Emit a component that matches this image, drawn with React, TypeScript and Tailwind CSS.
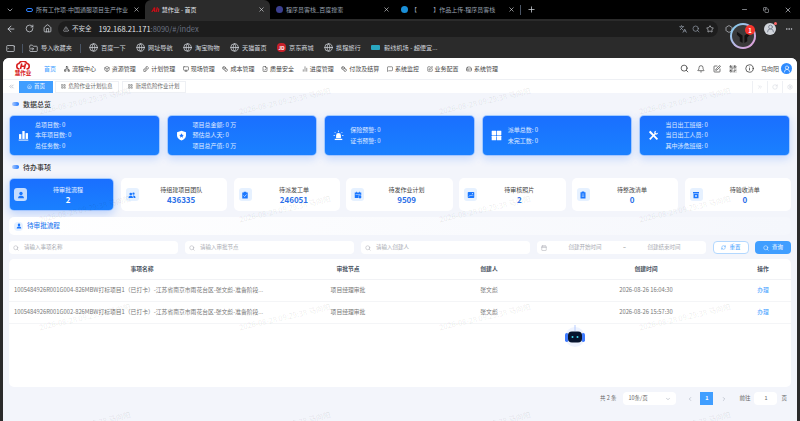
import React from 'react';
import {
  ArrowLeft, RotateCw, Home, AlertTriangle, Globe, Search, Star, X, Plus, Minus, Copy, MoreHorizontal,
  Bell, SquarePen, QrCode, Info, ChevronsLeft, ChevronsRight, Settings, ChevronLeft, ChevronRight, ChevronDown,
  LayoutGrid, Calendar, RefreshCw, Network, Box, FileStack, Monitor, Coins, FileCheck, ChartNoAxesColumn, MessageSquare,
  FolderInput, Languages, Tablet, HardDrive, UserRound, Hexagon,
} from 'lucide-react';

type Glyph = { size?: number; className?: string };

const Svg = ({ size = 12, className, children }: Glyph & { children: React.ReactNode }) => (
  <svg width={size} height={size} viewBox="0 0 16 16" fill="currentColor" className={className}>{children}</svg>
);

const BarsIcon = (p: Glyph) => (
  <Svg {...p}><rect x="1.5" y="6" width="3.4" height="7" /><rect x="6.3" y="1.5" width="3.4" height="11.5" /><rect x="11.1" y="4.5" width="3.4" height="8.5" /><rect x="1" y="14" width="14" height="1.4" /></Svg>
);
const ShieldIcon = (p: Glyph) => (
  <Svg {...p}><path d="M8 1 L14.5 3.2 V8 C14.5 11.5 11.5 14 8 15.4 C4.5 14 1.5 11.5 1.5 8 V3.2 Z" /><path d="M8 4.6 L9 7 L11.4 7.2 L9.6 8.8 L10.2 11.2 L8 9.9 L5.8 11.2 L6.4 8.8 L4.6 7.2 L7 7 Z" fill="#1a73ff" /></Svg>
);
const SirenIcon = (p: Glyph) => (
  <Svg {...p}><path d="M4.5 12 V8 A3.5 3.5 0 0 1 11.5 8 V12 Z" /><rect x="2.5" y="12.8" width="11" height="1.8" /><path d="M8 .8 V3 M2.4 3 L3.9 4.5 M13.6 3 L12.1 4.5 M.8 8 H2.8 M13.2 8 H15.2" stroke="currentColor" strokeWidth="1.1" /></Svg>
);
const GridIcon = (p: Glyph) => (
  <Svg {...p}><rect x="1" y="1" width="6.5" height="6.5" rx=".5" /><rect x="8.5" y="1" width="6.5" height="6.5" rx=".5" /><rect x="1" y="8.5" width="6.5" height="6.5" rx=".5" /><rect x="8.5" y="8.5" width="6.5" height="6.5" rx=".5" /></Svg>
);
const ToolsIcon = (p: Glyph) => (
  <Svg {...p}><path d="M2 2 L3.6 1.2 L14.6 12.6 L12.8 14.6 L1.6 3.6 Z" /><path d="M14.8 3.6 A3.4 3.4 0 0 1 10.4 6.6 L3.6 14.4 L1.6 12.6 L9.2 5.4 A3.4 3.4 0 0 1 12.2 1.2 L10.6 3.2 L12.6 5.2 Z" /></Svg>
);
const PersonIcon = (p: Glyph) => (
  <Svg {...p}><circle cx="8" cy="5" r="3.4" /><path d="M2 14.5 C2 10.8 5 9.6 8 9.6 C11 9.6 14 10.8 14 14.5 Z" /></Svg>
);
const TeamIcon = (p: Glyph) => (
  <Svg {...p}><circle cx="5.5" cy="6" r="2.6" /><path d="M1 14 C1 10.8 3 9.6 5.5 9.6 C8 9.6 10 10.8 10 14 Z" /><circle cx="11" cy="5.4" r="2.3" /><path d="M10.8 9 C13.2 9 15 10.4 15 14 H11.2 C11.2 11.8 10.8 10.4 9.8 9.4 Z" /></Svg>
);
const ClipCheckIcon = (p: Glyph) => (
  <Svg {...p}><path d="M2.5 3 H5.5 V1.5 H10.5 V3 H13.5 V15 H2.5 Z" /><path d="M5 9 L7.3 11.2 L11 7" fill="none" stroke="#e6f1ff" strokeWidth="1.4" /></Svg>
);
const CalendarGearIcon = (p: Glyph) => (
  <Svg {...p}><path d="M1.5 3 H4 V1.5 H5.5 V3 H10.5 V1.5 H12 V3 H14.5 V9 H9 V14 H1.5 Z" /><rect x="3" y="6" width="10" height="1" fill="#e6f1ff" /><circle cx="12" cy="12" r="2.8" /></Svg>
);
const PhotoIcon = (p: Glyph) => (
  <Svg {...p}><rect x="1.5" y="2" width="13" height="12" rx="1.5" /><path d="M3.5 11.5 L6.5 8 L8.5 10 L10.5 7.5 L12.5 10" fill="none" stroke="#e6f1ff" strokeWidth="1.1" /><circle cx="11" cy="5" r="1" fill="#e6f1ff" /></Svg>
);
const ClipListIcon = (p: Glyph) => (
  <Svg {...p}><path d="M3 2.5 H5.5 V1.2 H10.5 V2.5 H13 V15 H3 Z" /><path d="M5.5 6 H10.5 M5.5 8.5 H10.5 M5.5 11 H10.5" stroke="#e6f1ff" strokeWidth=".9" /></Svg>
);
const InboxIcon = (p: Glyph) => (
  <Svg {...p}><path d="M2 2 H14 V5 H2 Z M3 6 H13 V14.5 H3 Z" /><circle cx="8" cy="10" r="1.8" fill="#e6f1ff" /></Svg>
);

const navItems = [
  { label: '流程中心', Icon: Network },
  { label: '资源管理', Icon: Box },
  { label: '计划管理', Icon: FileStack },
  { label: '现场管理', Icon: Monitor },
  { label: '成本管理', Icon: Coins },
  { label: '质量安全', Icon: FileCheck },
  { label: '进度管理', Icon: ChartNoAxesColumn },
  { label: '付款及结算', Icon: Coins },
  { label: '系统监控', Icon: MessageSquare },
  { label: '业务配置', Icon: SquarePen },
  { label: '系统管理', Icon: HardDrive },
];

const bookmarks = ['百度一下', '网址导航', '淘宝购物', '天猫首页'];

const stats = [
  { Icon: BarsIcon, lines: ['总项目数:0', '本年项目数:0', '总任务数:0'] },
  { Icon: ShieldIcon, lines: ['项目总金额:0 万', '预估总人天:0', '项目总产值:0 万'] },
  { Icon: SirenIcon, lines: ['保险预警:0', '证书预警:0'] },
  { Icon: GridIcon, lines: ['派单总数:0', '未完工数:0'] },
  { Icon: ToolsIcon, lines: ['当日出工班组:0', '当日出工人员:0', '其中涉危班组:0'] },
];

const todos = [
  { label: '待组建项目团队', value: '436335', Icon: TeamIcon },
  { label: '待派发工单', value: '246051', Icon: ClipCheckIcon },
  { label: '待发作业计划', value: '9509', Icon: CalendarGearIcon },
  { label: '待审核照片', value: '2', Icon: PhotoIcon },
  { label: '待整改清单', value: '0', Icon: ClipListIcon },
  { label: '待验收清单', value: '0', Icon: InboxIcon },
];

const rows = [
  { name: '1005484926R001G004-826MBW打标项目1（已打卡）-江苏省南京市雨花台区-张文彪-准备阶段...', time: '2026-08-26 16:04:30' },
  { name: '1005484926R001G002-826MBW打标项目1（已打卡）-江苏省南京市雨花台区-张文彪-准备阶段...', time: '2026-08-26 15:57:30' },
];

const Tab = ({ title, active, icon }: { title: string; active?: boolean; icon: React.ReactNode }) => (
  <div className={`w-[125px] h-[19px] flex items-center gap-[3px] pl-[6px] pr-[5px] text-[6px] rounded-t-md ${active ? 'bg-[#2b2b2b] text-gray-200' : 'text-gray-400'}`}>
    {icon}
    <span className="flex-1 whitespace-pre">{title}</span>
    <X size={7} className="text-gray-200" />
  </div>
);

const SectionTitle = ({ title }: { title: string }) => (
  <div className="flex items-center gap-[3px] h-[10px]">
    <span className="w-[7px] h-[4px] rounded-full bg-gradient-to-r from-[#a9c8ff] to-[#1677ff]" />
    <span className="text-[7px] font-medium text-[#333] ml-[1px]">{title}</span>
  </div>
);

const FilterInput = ({ placeholder }: { placeholder: string }) => (
  <div className="w-[169px] h-[13px] bg-white rounded-sm flex items-center gap-[5px] px-[4px] text-[5.5px] text-[#a8abb2]">
    <Search size={6} />
    <span>{placeholder}</span>
  </div>
);

export default function App() {
  return (
    <div className="relative w-[800px] h-[421px] overflow-hidden bg-[#2b2b2b] flex flex-col" style={{ fontFamily: '"Noto Sans CJK SC", "Noto Sans", sans-serif' }}>
      {/* browser tabs */}
      <div className="h-[19px] bg-black flex items-center shrink-0">
        <div className="w-[20px] flex justify-center"><ChevronDown size={8} className="text-gray-300" /></div>
        <Tab title="所有工作项-中国通服项目生产作业" icon={<span className="w-[7px] h-[4px] rounded-full border border-blue-500" />} />
        <Tab active title="慧作业 - 首页" icon={<span className="text-[6px] font-bold text-red-600 italic">Ah</span>} />
        <Tab title="程序员客栈_百度搜索" icon={<span className="w-[7px] h-[7px] rounded-sm bg-[#3b3f8f]" />} />
        <Tab title="【            】作品上传-程序员客栈" icon={<span className="w-[7px] h-[7px] rounded-sm bg-[#1a8fd8]" />} />
        <div className="w-px h-[10px] bg-gray-600" />
        <Plus size={9} className="text-gray-300 ml-[6px]" />
        <div className="flex-1" />
        <div className="flex items-center gap-[15px] pr-[8px] text-gray-300">
          <Minus size={7} /><Copy size={6} /><X size={8} />
        </div>
      </div>

      {/* address bar */}
      <div className="h-[19px] flex items-center shrink-0 text-gray-300 pl-[6px] pr-[7px]">
        <ArrowLeft size={10} />
        <RotateCw size={9} className="ml-[9px]" />
        <Home size={9} className="ml-[9px]" />
        <div className="ml-[6px] flex-1 h-[16px] rounded-full bg-[#1d1d1d] flex items-center pl-[5px] pr-[4px]">
          <AlertTriangle size={6} />
          <span className="text-[6.5px] ml-[3px]">不安全</span>
          <span className="text-[7.5px] ml-[7px] text-gray-200">192.168.21.171<span className="text-gray-500">:8090/#/index</span></span>
          <div className="flex-1" />
          <Languages size={8} className="text-gray-400" />
          <Search size={8} className="ml-[5px] text-gray-400" />
          <Star size={8} className="ml-[6px]" />
        </div>
        <div className="w-[46px] pl-[7px]"><Hexagon size={8} /></div>
        <div className="relative w-[12px] h-[12px] rounded-full bg-gray-300 flex items-center justify-center">
          <UserRound size={9} className="text-gray-500" />
          <span className="absolute -right-[1px] -top-[1px] w-[3px] h-[3px] rounded-full bg-red-400" />
        </div>
        <MoreHorizontal size={8} className="ml-[9px]" />
      </div>

      {/* bookmarks */}
      <div className="h-[20px] flex items-center shrink-0 text-gray-300 text-[6.2px] pl-[6px]">
        <Tablet size={9} className="rotate-90" />
        <div className="w-px h-[9px] bg-gray-600 ml-[7px]" />
        <FolderInput size={9} className="ml-[6px]" />
        <span className="ml-[3px] w-[31px]">导入收藏夹</span>
        <div className="w-px h-[9px] bg-gray-600 ml-[8px]" />
        {bookmarks.map(b => (
          <div key={b} className="flex items-center gap-[3px] ml-[8px] w-[39px]">
            <Globe size={9} className="shrink-0" />
            <span className="whitespace-nowrap">{b}</span>
          </div>
        ))}
        <div className="flex items-center gap-[3px] ml-[8px] w-[39px]">
          <span className="w-[9px] h-[9px] shrink-0 bg-[#c8202a] text-white text-[5px] font-bold flex items-center justify-center rounded-sm">JD</span>
          <span className="whitespace-nowrap">京东商城</span>
        </div>
        <div className="flex items-center gap-[3px] ml-[8px] w-[39px]">
          <Globe size={9} className="shrink-0" />
          <span className="whitespace-nowrap">携程旅行</span>
        </div>
        <div className="flex items-center gap-[4px] ml-[8px]">
          <span className="w-[9px] h-[5px] bg-[#2aa7c0] rounded-[1px]" />
          <span>毅线机场 - 超便宜...</span>
        </div>
      </div>

      {/* app window */}
      <div className="relative flex-1 mx-[3px] bg-[#f3f5fb] rounded-t-md overflow-hidden flex flex-col">
        {/* nav */}
        <div className="h-[21px] bg-white flex items-center pl-[8px] pr-[5px] text-[6px] text-[#444] shrink-0">
          <div className="w-[24px] flex flex-col items-center leading-none">
            <svg width="14" height="9" viewBox="0 0 28 18">
              <path d="M7 16 C0 16 0 6 6 5 C8 -1 20 -1 22 5 C28 6 28 16 21 16" fill="none" stroke="#d81e1e" strokeWidth="3.2" />
              <path d="M11.5 5 L9 16 M19 5 L16.5 16 M9 10.5 L18 10.5" stroke="#d81e1e" strokeWidth="3.2" />
            </svg>
            <span className="text-[5.5px] font-bold text-[#d81e1e] leading-[6px]">慧作业</span>
          </div>
          <span className="ml-[9px] text-[#409eff]">首页</span>
          <div className="flex items-center ml-[8px]">
            {navItems.map(({ label, Icon }) => (
              <div key={label} className="flex items-center gap-[2px] mr-[7.6px] whitespace-nowrap">
                <Icon size={6} className="text-[#333]" />
                <span>{label}</span>
              </div>
            ))}
          </div>
          <div className="flex-1" />
          <div className="flex items-center gap-[8px] text-[#333]">
            <Search size={9} />
            <Bell size={8} />
            <SquarePen size={8} />
            <QrCode size={8} />
            <Info size={9} />
          </div>
          <span className="ml-[7px] text-[#555]">马向阳</span>
          <div className="ml-[2px] w-[11px] h-[11px] rounded-full bg-[#2f8cff] flex items-center justify-center">
            <UserRound size={8} className="text-white" />
          </div>
        </div>

        {/* opened pages */}
        <div className="h-[14px] bg-white border-t border-[#eef0f4] flex items-center shrink-0 text-[5.5px] text-[#666]">
          <div className="w-[16px] flex justify-center text-gray-400"><ChevronsLeft size={7} /></div>
          <div className="h-[12px] w-[34px] bg-[#409eff] text-white flex items-center justify-center gap-[2px]">
            <Home size={5} />首页
          </div>
          <div className="h-[12px] w-[64px] ml-[2px] border border-[#eef0f4] flex items-center justify-center gap-[2px]">
            <LayoutGrid size={5} />危险作业计划信息
          </div>
          <div className="h-[12px] w-[64px] ml-[3px] border border-[#eef0f4] flex items-center justify-center gap-[2px]">
            <LayoutGrid size={5} />新增危险作业计划
          </div>
          <div className="flex-1" />
          <div className="flex text-gray-300">
            <div className="w-[15px] h-[12px] border-l border-[#eef0f4] flex items-center justify-center"><ChevronsRight size={6} /></div>
            <div className="w-[15px] h-[12px] border-l border-[#eef0f4] flex items-center justify-center"><RotateCw size={6} /></div>
            <div className="w-[15px] h-[12px] border-l border-[#eef0f4] flex items-center justify-center"><Settings size={6} /></div>
          </div>
        </div>

        {/* content */}
        <div className="flex-1 flex flex-col px-[6px] pt-[6px]">
          <div className="pl-[3px]"><SectionTitle title="数据总览" /></div>
          <div className="flex gap-[7px] mt-[6px] pr-[1px]">
            {stats.map(({ Icon, lines }, i) => (
              <div key={i} className="flex-1 h-[41px] rounded-[5px] border border-white/60 bg-gradient-to-b from-[#1a6fff] to-[#1a80ff] shadow-[0_3px_8px_rgba(30,110,255,0.2)] flex items-center pl-[8px] text-white">
                <Icon size={11} className="shrink-0" />
                <div className="ml-[6px] flex flex-col text-[6px] leading-[10.2px] text-white/85">
                  {lines.map(l => <span key={l}>{l.replace(':', ':  ')}</span>)}
                </div>
              </div>
            ))}
          </div>

          <div className="pl-[3px] mt-[6px]"><SectionTitle title="待办事项" /></div>
          <div className="flex gap-[6.4px] mt-[6px]">
            <div className="w-[105px] mr-[0.6px] h-[33px] shrink-0 rounded-[5px] border border-white/60 bg-gradient-to-b from-[#1a6fff] to-[#1a80ff] text-white shadow-[0_3px_8px_rgba(30,110,255,0.25)] flex items-center pl-[4px] pr-[4px]">
              <div className="w-[13px] h-[13px] rounded-[3px] bg-white/75 text-[#1a77ff] flex items-center justify-center shrink-0">
                <PersonIcon size={8} />
              </div>
              <div className="flex-1 flex flex-col items-center">
                <span className="text-[6px] leading-[9px] text-white/90">待审批流程</span>
                <span className="text-[8px] leading-[11px] font-bold">2</span>
              </div>
            </div>
            {todos.map(({ label, value, Icon }) => (
              <div key={label} className="flex-1 h-[33px] rounded-[5px] bg-white flex items-center pl-[5px] pr-[4px]">
                <div className="w-[13px] h-[13px] rounded-[3px] bg-[#e6f1ff] text-[#1a77ff] flex items-center justify-center shrink-0">
                  <Icon size={8} />
                </div>
                <div className="flex-1 flex flex-col items-center">
                  <span className="text-[6px] leading-[9px] text-[#444]">{label}</span>
                  <span className="text-[8px] leading-[11px] font-bold text-[#2b6fe8]">{value}</span>
                </div>
              </div>
            ))}
          </div>

          <div className="mt-[6px] h-[18px] bg-gradient-to-r from-white to-[#f5f7fc] rounded-[5px] flex items-center pl-[5px] gap-[4px]">
            <div className="w-[9px] h-[9px] rounded-sm bg-[#e6f1ff] flex items-center justify-center text-[#1a77ff]">
              <PersonIcon size={6} />
            </div>
            <span className="text-[6.6px] font-medium text-[#2b7cf0]">待审批流程</span>
          </div>

          <div className="flex items-center gap-[7px] mt-[6px]">
            <FilterInput placeholder="请输入事项名称" />
            <FilterInput placeholder="请输入审批节点" />
            <FilterInput placeholder="请输入创建人" />
            <div className="w-[169px] h-[13px] bg-white rounded-sm flex items-center px-[4px] text-[5.5px] text-[#a8abb2]">
              <Calendar size={6} />
              <span className="flex-1 text-center">创建开始时间</span>
              <span className="text-[#555]">–</span>
              <span className="flex-1 text-center">创建结束时间</span>
            </div>
            <div className="w-[36px] h-[13px] bg-white border border-[#b3d8ff] rounded-sm flex items-center justify-center gap-[3px] text-[5.5px] text-[#409eff]">
              <RefreshCw size={5} />重置
            </div>
            <div className="w-[36px] h-[13px] -ml-[1px] bg-[#409eff] rounded-sm flex items-center justify-center gap-[3px] text-[5.5px] text-white">
              <Search size={6} />查询
            </div>
          </div>

          <div className="mt-[5px] h-[128px] shrink-0 bg-white rounded-[5px] text-[5.8px]">
            <div className="h-[21px] grid grid-cols-[266px_146px_136px_178px_56px] items-center text-center font-bold text-[#4b5563] border-b border-[#f1f2f5]">
              <span>事项名称</span><span>审批节点</span><span>创建人</span><span>创建时间</span><span>操作</span>
            </div>
            {rows.map(r => (
              <div key={r.time} className="h-[22px] grid grid-cols-[266px_146px_136px_178px_56px] items-center text-center text-[#777] border-b border-[#f4f5f7]">
                <span className="text-left pl-[5px] whitespace-nowrap overflow-hidden">{r.name}</span>
                <span>项目经理审批</span>
                <span>张文彪</span>
                <span>{r.time}</span>
                <span className="text-[#409eff]">办理</span>
              </div>
            ))}
          </div>

          <div className="flex items-center justify-end mt-[5px] pr-[4px] text-[5.5px] text-[#666]">
            <span>共 2 条</span>
            <div className="w-[53px] h-[13px] ml-[7px] bg-white rounded-sm flex items-center justify-between px-[5px]">
              <span>10条/页</span>
              <ChevronDown size={6} className="text-gray-400" />
            </div>
            <ChevronLeft size={6} className="ml-[11px] text-gray-400" />
            <div className="w-[13px] h-[13px] ml-[7px] bg-[#409eff] text-white font-bold flex items-center justify-center">1</div>
            <ChevronRight size={6} className="ml-[8px] text-gray-400" />
            <span className="ml-[12px]">前往</span>
            <div className="w-[23px] h-[13px] ml-[4px] bg-white rounded-sm flex items-center justify-center">1</div>
            <span className="ml-[4px]">页</span>
          </div>
        </div>

        {/* watermark */}
        <div className="absolute left-[-18px] top-[-11px] w-[800px] grid grid-cols-[repeat(4,200px)] auto-rows-[108px] pointer-events-none">
          {Array.from({ length: 16 }).map((_, i) => (
            <div key={i} className="flex items-center justify-center">
              <span className="-rotate-[13deg] whitespace-nowrap text-[7.5px] text-black/[0.09]">2026-08-28 09:29:38 马向阳</span>
            </div>
          ))}
        </div>

        {/* chat robot */}
        <div className="absolute left-[561px] top-[266px]">
          <svg width="22" height="24" viewBox="0 0 22 24">
            <circle cx="11" cy="13" r="10" fill="#eef3ff" />
            <path d="M11 1 V7" stroke="#b7ccff" strokeWidth="1" />
            <rect x="1" y="9" width="3.5" height="9" rx="1.7" fill="#3f7bff" />
            <rect x="17.5" y="9" width="3.5" height="9" rx="1.7" fill="#3f7bff" />
            <rect x="4" y="7.5" width="14" height="11" rx="4" fill="#07142e" />
            <rect x="7.5" y="12" width="2" height="2" rx="1" fill="#43d8ee" />
            <rect x="12.5" y="12" width="2" height="2" rx="1" fill="#43d8ee" />
          </svg>
        </div>
      </div>

      {/* floating extension avatar */}
      <div className="absolute left-[730px] top-[23px] w-[26px] h-[26px] rounded-full bg-gradient-to-br from-[#6fd0f0] to-[#e89ad8] flex items-center justify-center">
        <div className="w-[22px] h-[22px] rounded-full bg-[#3a3a3a] flex items-center justify-center">
          <svg width="15" height="15" viewBox="0 0 16 16">
            <path d="M1 3 L7 7 V15 L4 13 V9 L1 6 Z M15 3 L9 7 V15 L12 13 V9 L15 6 Z" fill="#111" />
          </svg>
        </div>
      </div>
      <div className="absolute left-[745px] top-[25px] w-[10px] h-[10px] rounded-full bg-[#f5332c] text-white text-[6px] font-bold flex items-center justify-center">1</div>
    </div>
  );
}
